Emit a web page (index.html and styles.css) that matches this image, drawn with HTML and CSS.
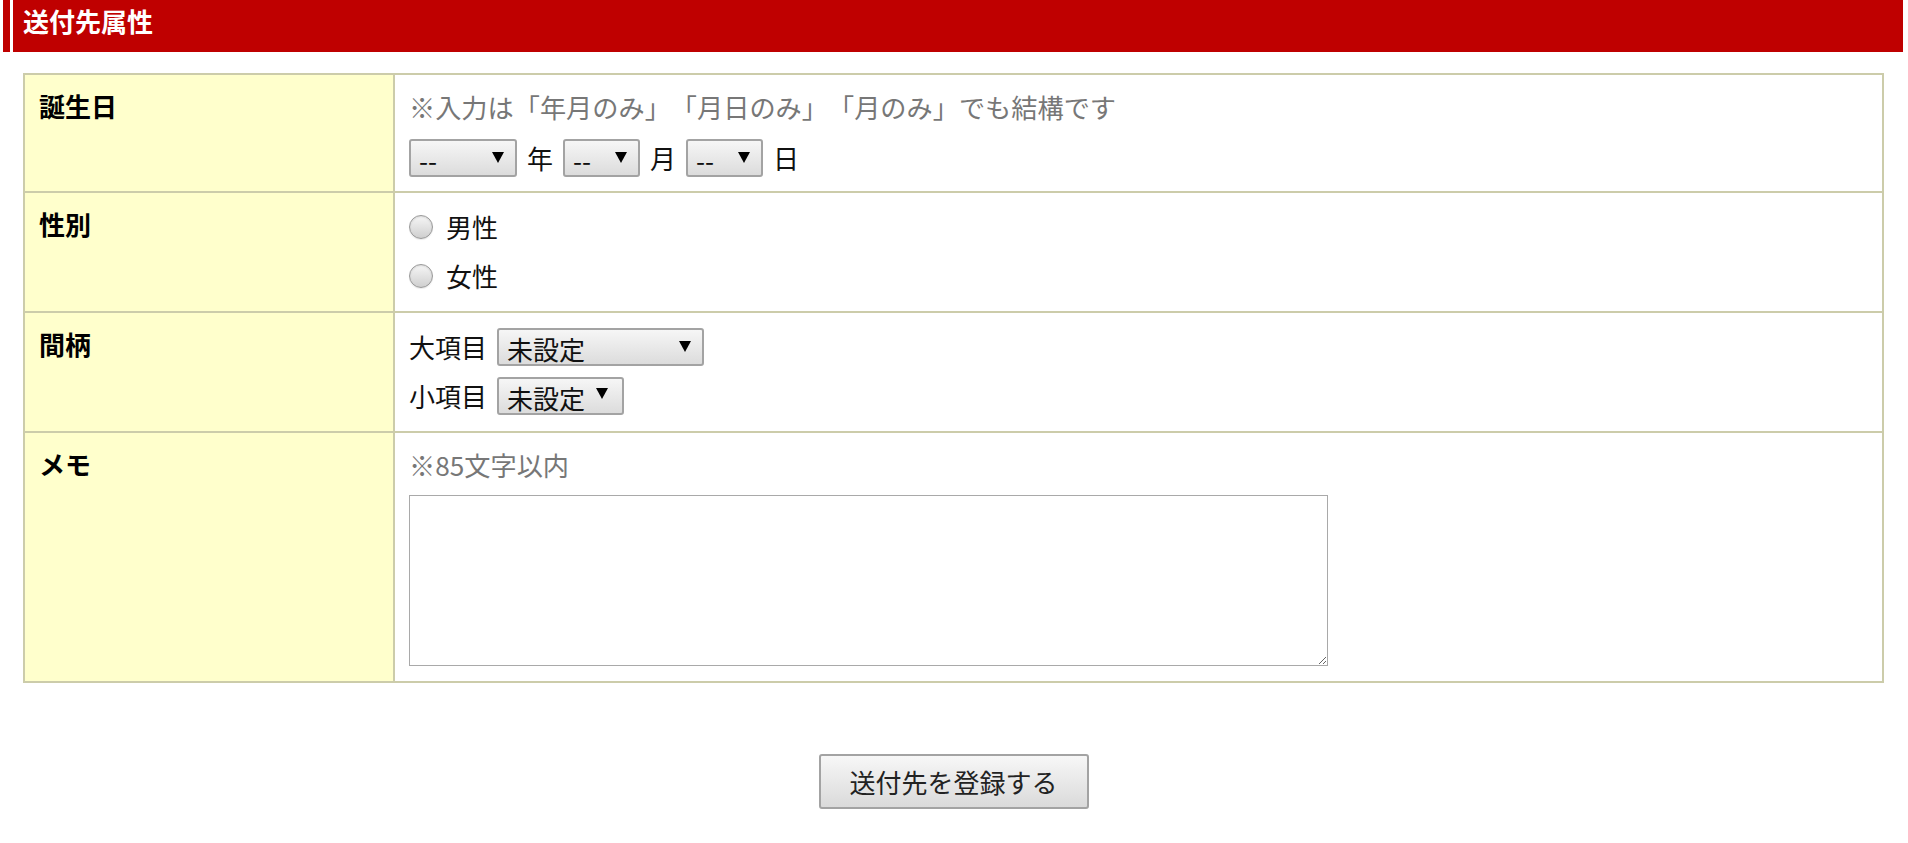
FILE: index.html
```html
<!DOCTYPE html>
<html lang="ja">
<head>
<meta charset="utf-8">
<title>送付先属性</title>
<link rel="stylesheet" href="styles.css">
</head>
<body>
<header class="section-head">
  <h2 class="section-title">送付先属性</h2>
</header>

<form class="attr-form">
  <div class="attr-table">
    <div class="row">
      <div class="label">誕生日</div>
      <div class="value v-birth">
        <p class="note">※入力は「年月のみ」「月日のみ」「月のみ」でも結構です</p>
        <div class="line date-line">
          <span class="sel sel-year"><select><option>--</option></select></span>
          <span class="unit">年</span>
          <span class="sel sel-md"><select><option>--</option></select></span>
          <span class="unit">月</span>
          <span class="sel sel-md"><select><option>--</option></select></span>
          <span class="unit">日</span>
        </div>
      </div>
    </div>

    <div class="row">
      <div class="label">性別</div>
      <div class="value v-stack">
        <label class="line radio-line"><input type="radio" name="sex" class="radio"><span>男性</span></label>
        <label class="line radio-line"><input type="radio" name="sex" class="radio"><span>女性</span></label>
      </div>
    </div>

    <div class="row">
      <div class="label">間柄</div>
      <div class="value v-stack">
        <div class="line">
          <span class="field-name">大項目</span>
          <span class="sel sel-large"><select><option>未設定</option></select></span>
        </div>
        <div class="line">
          <span class="field-name">小項目</span>
          <span class="sel sel-small"><select><option>未設定</option></select></span>
        </div>
      </div>
    </div>

    <div class="row">
      <div class="label">メモ</div>
      <div class="value v-memo">
        <p class="note">※85文字以内</p>
        <textarea class="memo"></textarea>
      </div>
    </div>
  </div>

  <div class="actions">
    <button type="button" class="submit">送付先を登録する</button>
  </div>
</form>
</body>
</html>
```

FILE: styles.css
```css
html, body {
  margin: 0;
  padding: 0;
  background: #ffffff;
}

body {
  font-family: "Noto Sans CJK JP", "Noto Sans", "Liberation Sans", sans-serif;
  color: #111111;
  font-size: 26px;
  text-spacing-trim: space-all;
}

/* ---------- section header ---------- */
.section-head {
  display: flex;
  height: 52px;
  margin: 0 5px 0 3px;
  border-left: 7px solid #bf0000;
  padding-left: 3px;
  background: #ffffff;
}

.section-title {
  flex: 1;
  margin: 0;
  background: #bf0000;
  color: #ffffff;
  font-size: 26px;
  font-weight: 700;
  line-height: 42px;
  padding-left: 10px;
}

/* ---------- table ---------- */
.attr-form {
  margin: 21px 24px 0 23px;
}

.attr-table {
  border: 2px solid #ccccaa;
}

.row {
  display: grid;
  grid-template-columns: 370px 1fr;
  border-top: 2px solid #ccccaa;
}

.row:first-child {
  border-top: none;
}

.label {
  background: #ffffcc;
  border-right: 2px solid #ccccaa;
  padding: 13px 14px;
  font-weight: 700;
  line-height: 36px;
  color: #000000;
}

.value {
  padding: 12px 14px 14px 14px;
  line-height: 36px;
}

.note {
  margin: 0;
  color: #777777;
  line-height: 36px;
  font-size: 26.2px;
}

.line {
  display: flex;
  align-items: center;
  height: 43px;
}

.v-birth {
  padding-top: 14px;
  padding-bottom: 12px;
}

.date-line {
  margin-top: 11px;
  gap: 10px;
}

.v-stack {
  display: flex;
  flex-direction: column;
  gap: 6px;
}

.unit,
.field-name {
  color: #111111;
}

.field-name {
  margin-right: 10px;
}

/* ---------- select boxes ---------- */
.sel {
  position: relative;
  display: inline-block;
  height: 38px;
}

.sel select {
  -webkit-appearance: none;
  appearance: none;
  display: block;
  box-sizing: border-box;
  height: 38px;
  margin: 0;
  border: 2px solid #a3a3a3;
  border-radius: 3px;
  background: linear-gradient(#f6f6f6, #dcdcdc);
  color: #111111;
  font-family: "Noto Sans CJK JP", "Noto Sans", sans-serif;
  font-size: 26px;
  padding: 4px 0 0 8px;
  line-height: 30px;
}

.sel::after {
  content: "";
  position: absolute;
  right: 13px;
  top: 50%;
  margin-top: -6px;
  width: 0;
  height: 0;
  border-left: 6px solid transparent;
  border-right: 6px solid transparent;
  border-top: 11px solid #000000;
  pointer-events: none;
}

.sel-year select { width: 108px; }
.sel-md select   { width: 77px; }
.sel-large select { width: 207px; }
.sel-small select { width: 127px; }

.sel-md::after,
.sel-year::after {
  margin-top: -6px;
}

.sel-small::after {
  right: 16px;
  margin-top: -8px;
}

/* ---------- radios ---------- */
.radio-line {
  gap: 13px;
  cursor: pointer;
}

.radio {
  -webkit-appearance: none;
  appearance: none;
  box-sizing: border-box;
  width: 24px;
  height: 24px;
  margin: 0;
  border: 1px solid #999999;
  border-radius: 50%;
  background: linear-gradient(#f6f6f6, #cfcfcf);
  box-shadow: inset 0 1px 2px rgba(0, 0, 0, 0.12), 0 1px 1px rgba(0, 0, 0, 0.08);
}

/* ---------- memo ---------- */
.v-memo {
  padding-top: 14px;
  padding-bottom: 15px;
}

.memo {
  display: block;
  box-sizing: border-box;
  width: 919px;
  height: 171px;
  margin-top: 12px;
  border: 1px solid #a9a9a9;
  border-radius: 0;
  padding: 4px;
  font-family: "Noto Sans CJK JP", sans-serif;
  font-size: 20px;
}

/* ---------- submit ---------- */
.actions {
  margin-top: 71px;
  display: flex;
  justify-content: center;
}

.submit {
  box-sizing: border-box;
  width: 270px;
  height: 55px;
  border: 2px solid #a3a3a3;
  border-radius: 3px;
  background: linear-gradient(#f7f7f7, #dadada);
  color: #222222;
  font-family: "Noto Sans CJK JP", "Noto Sans", sans-serif;
  font-size: 26px;
  padding: 0;
  line-height: 51px;
}
```
